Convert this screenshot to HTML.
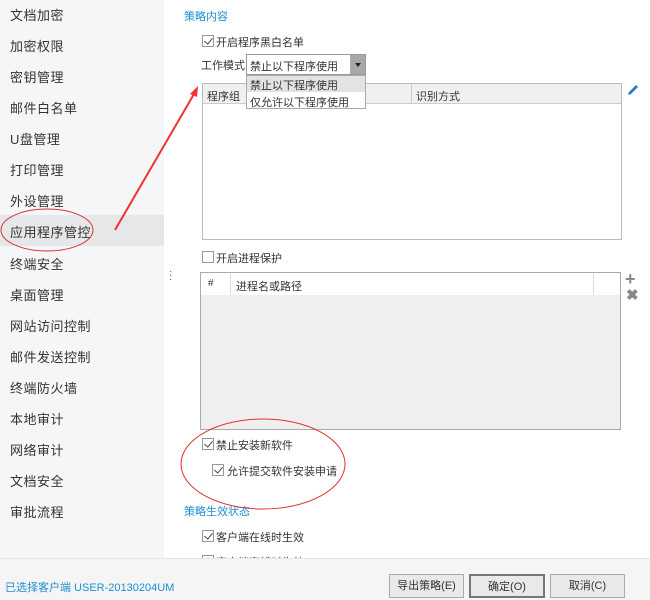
<!DOCTYPE html>
<html><head><meta charset="utf-8"><style>
*{margin:0;padding:0;box-sizing:border-box}
body{width:650px;height:600px;overflow:hidden;background:#fff;font-family:"Liberation Sans","Noto Sans CJK SC",sans-serif;font-size:11px;color:#333;position:relative}
.a{position:absolute;white-space:nowrap}
#side{position:absolute;left:0;top:0;width:164px;height:558px;background:#f5f6f7}
.it{position:absolute;left:10px;font-size:13px;color:#333;letter-spacing:0.5px}
.cb{position:absolute;width:12px;height:12px;border:1px solid #999;background:#fff}
.cb.c::after{content:"";position:absolute;left:3px;top:0px;width:4px;height:7px;border:solid #444;border-width:0 1px 1px 0;transform:rotate(40deg)}
.blue{color:#1b8fd0}
#foot{position:absolute;left:0;top:558px;width:650px;height:42px;background:#f5f5f5;border-top:1px solid #e6e6e6}
.btn{position:absolute;top:15px;height:24px;border:1px solid #aaa;background:#e9e9e9;font-size:11px;text-align:center;line-height:22px;color:#333}
</style></head><body>
<div id="side">
<div class="it" style="top:5px">文档加密</div>
<div class="it" style="top:36px">加密权限</div>
<div class="it" style="top:67px">密钥管理</div>
<div class="it" style="top:98px">邮件白名单</div>
<div class="it" style="top:129px">U盘管理</div>
<div class="it" style="top:160px">打印管理</div>
<div class="it" style="top:191px">外设管理</div>
<div style="position:absolute;left:0;top:215px;width:164px;height:31px;background:#e6e7e8"></div>
<div class="it" style="top:222px">应用程序管控</div>
<div class="it" style="top:254px">终端安全</div>
<div class="it" style="top:285px">桌面管理</div>
<div class="it" style="top:316px">网站访问控制</div>
<div class="it" style="top:347px">邮件发送控制</div>
<div class="it" style="top:378px">终端防火墙</div>
<div class="it" style="top:409px">本地审计</div>
<div class="it" style="top:440px">网络审计</div>
<div class="it" style="top:471px">文档安全</div>
<div class="it" style="top:502px">审批流程</div>
</div>
<div class="a" style="left:169px;top:270px;color:#555;line-height:4px;font-size:10px">·<br>·<br>·</div>

<div class="a blue" style="left:184px;top:8px">策略内容</div>
<div class="cb c" style="left:202px;top:35px"></div>
<div class="a" style="left:216px;top:34px">开启程序黑白名单</div>
<div class="a" style="left:201px;top:57px">工作模式</div>

<div style="position:absolute;left:202px;top:83px;width:420px;height:157px;border:1px solid #bbb;background:#fff"></div>
<div style="position:absolute;left:203px;top:84px;width:418px;height:20px;background:#f0f0f0;border-bottom:1px solid #ccc"></div>
<div style="position:absolute;left:411px;top:84px;width:1px;height:20px;background:#ccc"></div>
<div class="a" style="left:207px;top:88px">程序组</div>
<div class="a" style="left:416px;top:88px">识别方式</div>
<svg class="a" style="left:626px;top:83px" width="14" height="14" viewBox="0 0 14 14"><path d="M2 12 L3 9 L10 2 L12 4 L5 11 Z" fill="#1b7fcf"/></svg>

<div style="position:absolute;left:246px;top:54px;width:120px;height:21px;border:1px solid #999;background:#fff"></div>
<div class="a" style="left:250px;top:58px">禁止以下程序使用</div>
<div style="position:absolute;left:350px;top:55px;width:15px;height:19px;background:#a8a8a8"></div>
<div style="position:absolute;left:355px;top:63px;border:3px solid transparent;border-top:4px solid #222"></div>
<div style="position:absolute;left:246px;top:75px;width:120px;height:34px;border:1px solid #aaa;background:#fff"></div>
<div style="position:absolute;left:247px;top:76px;width:118px;height:16px;background:#e3e3e3"></div>
<div class="a" style="left:250px;top:77px">禁止以下程序使用</div>
<div class="a" style="left:250px;top:94px">仅允许以下程序使用</div>

<div class="cb" style="left:202px;top:251px"></div>
<div class="a" style="left:216px;top:250px">开启进程保护</div>

<div style="position:absolute;left:200px;top:272px;width:421px;height:158px;border:1px solid #aaa;background:#efefef"></div>
<div style="position:absolute;left:201px;top:273px;width:419px;height:22px;background:#fff"></div>
<div style="position:absolute;left:230px;top:273px;width:1px;height:22px;background:#ddd"></div>
<div style="position:absolute;left:593px;top:273px;width:1px;height:22px;background:#ddd"></div>
<div class="a" style="left:208px;top:278px;font-size:10px">#</div>
<div class="a" style="left:236px;top:278px">进程名或路径</div>
<div class="a" style="left:625px;top:270px;font-size:18px;font-weight:bold;color:#888;line-height:18px">+</div>
<div class="a" style="left:626px;top:288px;font-size:15px;font-weight:bold;color:#888;line-height:16px">✖</div>

<div class="cb c" style="left:202px;top:438px"></div>
<div class="a" style="left:216px;top:437px">禁止安装新软件</div>
<div class="cb c" style="left:212px;top:464px"></div>
<div class="a" style="left:227px;top:463px">允许提交软件安装申请</div>
<div class="blue a" style="left:184px;top:503px">策略生效状态</div>
<div class="cb c" style="left:202px;top:530px"></div>
<div class="a" style="left:216px;top:529px">客户端在线时生效</div>
<div class="cb c" style="left:202px;top:555px"></div>
<div class="a" style="left:216px;top:554px">客户端离线时生效</div>

<svg class="a" style="left:0;top:0" width="650" height="600">
<ellipse cx="47" cy="230" rx="46" ry="21" fill="none" stroke="#d33" stroke-width="1"/>
<ellipse cx="263" cy="464" rx="82" ry="45" fill="none" stroke="#d33" stroke-width="1"/>
<line x1="115" y1="230" x2="194" y2="94" stroke="#e33" stroke-width="2"/>
<path d="M198 86 L190 94 L197 97 Z" fill="#e33"/>
</svg>

<div id="foot">
<div class="a blue" style="left:5px;top:20px;font-size:11px">已选择客户端 USER-20130204UM</div>
<div class="btn" style="left:389px;width:75px">导出策略(E)</div>
<div class="btn" style="left:469px;width:76px;border:2px solid #777">确定(O)</div>
<div class="btn" style="left:550px;width:75px">取消(C)</div>
</div>
</body></html>
